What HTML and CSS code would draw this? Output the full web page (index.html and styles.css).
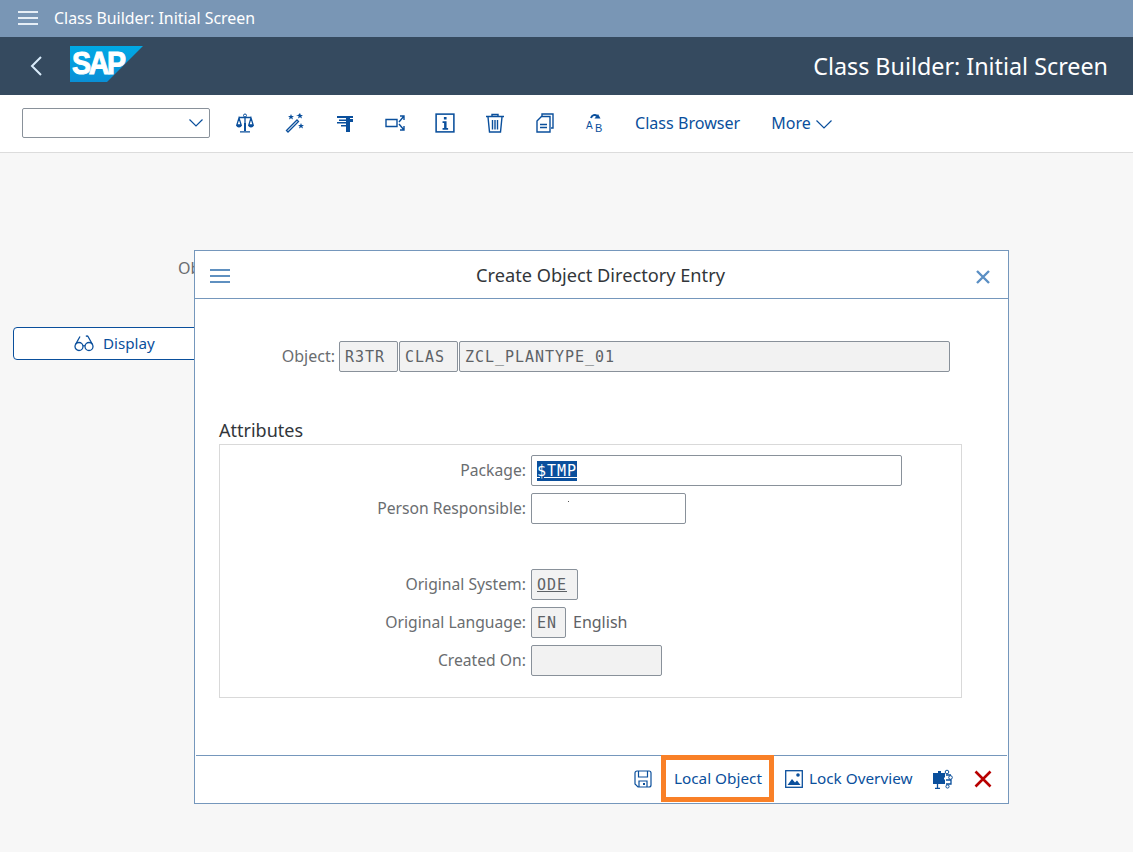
FILE: index.html
```html
<!DOCTYPE html>
<html lang="en">
<head>
    <meta charset="UTF-8">
    <meta name="viewport" content="width=device-width, initial-scale=1.0">
    <title>Class Builder: Initial Screen</title>
    <link rel="stylesheet" href="styles.css">
</head>
<body>
    <!-- Title bar -->
    <div class="title-bar">
        <svg class="burger" width="20" height="14" viewBox="0 0 20 14"><path d="M0 1h20M0 7h20M0 13h20" stroke="#e6eef6" stroke-width="2"/></svg>
        <span>Class Builder: Initial Screen</span>
    </div>

    <!-- Shell header -->
    <div class="shell">
        <svg class="back" width="12" height="20" viewBox="0 0 12 20"><path d="M11 1L2 10l9 9" fill="none" stroke="#d9ecfb" stroke-width="2"/></svg>
        <div class="logo">
            <svg width="73" height="36" viewBox="0 0 73 36"><defs><linearGradient id="sapblue" x1="0" y1="0" x2="0" y2="1"><stop offset="0" stop-color="#00a9e5"/><stop offset="1" stop-color="#0a8fd6"/></linearGradient></defs><polygon points="0,0 73,0 37,36 0,36" fill="url(#sapblue)"/></svg>
            <span class="logo-text">SAP</span>
        </div>
        <h1>Class Builder: Initial Screen</h1>
    </div>

    <!-- Toolbar -->
    <div class="toolbar">
        <div class="select-box">
            <svg width="14" height="8" viewBox="0 0 14 8"><path d="M.5.5L7 7 13.5.5" fill="none" stroke="#0a4f9c" stroke-width="1.2"/></svg>
        </div>
        <div class="tool-icons">
            <svg class="icon" viewBox="0 0 18 20"><circle cx="9" cy="2.500" r="1.500" fill="none" stroke="#0a4f9c"/><path d="M9 4v14M4 18.800h10M3 4.500h12M3 5L.8 12h4.400zM15 5l-2.200 7h4.400z" fill="none" stroke="#0a4f9c" stroke-width="1.300"/><path d="M.3 12a2.700 2.400 0 0 0 5.400 0zM12.300 12a2.700 2.400 0 0 0 5.400 0z" fill="#0a4f9c"/><path d="M8 10h2v8H8z" fill="#0a4f9c"/></svg>
            <svg class="icon" viewBox="0 0 20 20"><path d="M1.500 17.500L12 7l1.500 1.500L3 19z" fill="none" stroke="#0a4f9c" stroke-width="1.300"/><path d="M6 1l.8 2H9L7.300 4.300 8 6.500 6 5.200 4 6.500l.7-2.200L3 3h2.200zM15 0l.8 2H18l-1.700 1.300.7 2.200-2-1.300-2 1.300.7-2.200L11 2h2.200zM16 10l.8 2H19l-1.700 1.300.7 2.200-2-1.300-2 1.300.7-2.200L13 12h2.200z" fill="#0a4f9c"/></svg>
            <svg class="icon" viewBox="0 0 18 20"><path d="M1 3h16v2H1zM3 6.500h9V8H3zM1 9h10v1.500H1zM5 12h6v1.500H5zM10 5h4v14h-4zM14 6h3v3h-3z" fill="#0a4f9c"/></svg>
            <svg class="icon" viewBox="0 0 20 20"><path d="M1 6.500h11v7H1zM14 9l5-6M15 3h4v4M14 11l5 6M15 17h4v-4" fill="none" stroke="#0a4f9c" stroke-width="1.400"/></svg>
            <svg class="icon" viewBox="0 0 18 18"><rect x="1" y="1" width="16" height="16" fill="none" stroke="#0a4f9c" stroke-width="1.400"/><path d="M8 3.500h2.400v2.400H8zM6.800 7.500h3.600v6h1.400V15H6.800v-1.500h1.400V9H6.800z" fill="#0a4f9c"/></svg>
            <svg class="icon" viewBox="0 0 18 20"><path d="M0 3.500h18M6 3.500V1.500h6v2M2 4L3.500 19h11L16 4M6.500 7v9.500M9 7v9.500M11.500 7v9.500" fill="none" stroke="#0a4f9c" stroke-width="1.400"/></svg>
            <svg class="icon" viewBox="0 0 18 20"><path d="M6 3.500V1h11v14h-2M1 8l4.500-4.500H14V19H1zM4 11.500h7M4 14.500h7" fill="none" stroke="#0a4f9c" stroke-width="1.400"/></svg>
            <svg class="icon icon-ab" viewBox="0 0 18 20"><path d="M5 5C6 2 9 1 11 3" fill="none" stroke="#0a4f9c" stroke-width="2"/><path d="M8.500 5.500h6L12 1z" fill="#0a4f9c"/><text x="0" y="15.500" class="icon-a">A</text><text x="9" y="19" class="icon-b">B</text></svg>
        </div>
        <a class="tool-link browser">Class Browser</a>
        <a class="tool-link more">More
            <svg width="16" height="9" viewBox="0 0 16 9"><path d="M.5.5L8 8 15.500.5" fill="none" stroke="#0a4f9c" stroke-width="1.200"/></svg>
        </a>
    </div>

    <!-- Screen behind the dialog -->
    <div class="content">
        <div class="back-label">Object Type</div>
        <div class="display-btn">
            <svg width="20" height="17" viewBox="0 0 20 17"><g fill="none" stroke="#0a4f9c" stroke-width="1.300"><circle cx="5" cy="11.500" r="4"/><circle cx="15" cy="11.500" r="4"/><path d="M9 11c.7-.6 1.300-.6 2 0M1.500 9.500L6 1.500M18.500 9.500L14 1.500C13.500.8 12.500.8 12 1.500"/></g></svg>
            <span class="display-text">Display</span>
        </div>
    </div>

    <!-- Dialog -->
    <div class="dialog">
        <div class="dialog-head">
            <svg class="dialog-menu" width="20" height="14" viewBox="0 0 20 14"><path d="M0 1h20M0 7h20M0 13h20" stroke="#5f90c0" stroke-width="2"/></svg>
            <span class="dialog-title">Create Object Directory Entry</span>
            <svg class="dialog-close" width="14" height="14" viewBox="0 0 14 14"><path d="M1 1l12 12M13 1L1 13" stroke="#5b8fc4" stroke-width="2.400"/></svg>
        </div>

        <div class="dialog-body">
            <div class="object-row">
                <label class="object-label">Object:</label>
                <div class="field ro w-59">R3TR</div>
                <div class="field ro w-59">CLAS</div>
                <div class="field ro w-491">ZCL_PLANTYPE_01</div>
            </div>

            <h3 class="group-title">Attributes</h3>
            <div class="group">
                <div class="row">
                    <label>Package:</label>
                    <div class="field w-371"><span class="selected">$TMP</span></div>
                </div>
                <div class="row">
                    <label>Person Responsible:</label>
                    <div class="field w-155"><i class="speck"></i></div>
                </div>
                <div class="row gap-top">
                    <label>Original System:</label>
                    <div class="field ro w-47"><u>ODE</u></div>
                </div>
                <div class="row">
                    <label>Original Language:</label>
                    <div class="field ro w-35">EN</div>
                    <span class="lang-text">English</span>
                </div>
                <div class="row">
                    <label>Created On:</label>
                    <div class="field ro w-131"></div>
                </div>
            </div>
        </div>

        <div class="dialog-foot">
            <svg class="foot-save" width="18" height="18" viewBox="0 0 18 18"><path d="M3 1h12a2 2 0 0 1 2 2v12a2 2 0 0 1-2 2H4l-3-3V3a2 2 0 0 1 2-2zM4.500 1v6h9V1M5 17v-6h8v6" fill="none" stroke="#0a4f9c" stroke-width="1.200"/><rect x="9" y="13" width="2" height="2" fill="#0a4f9c"/></svg>
            <a class="foot-link local">Local Object</a>
            <svg class="foot-img" width="18" height="18" viewBox="0 0 18 18"><rect x=".7" y=".7" width="16.600" height="16.600" fill="none" stroke="#0a4f9c" stroke-width="1.300"/><path d="M2.500 15l4.500-6 3 3.500 2-2 3.500 4.500z" fill="#0a4f9c"/><circle cx="13" cy="5" r="1.800" fill="#0a4f9c"/></svg>
            <a class="foot-link lock">Lock Overview</a>
            <svg class="foot-puzzle" width="20" height="20" viewBox="0 0 20 20"><path d="M0 4h5V2h3v2h4v4.500h-1v2h1V15H0z" fill="#0a4f9c"/><circle cx="14" cy="3" r="1.800" fill="none" stroke="#0a4f9c"/><circle cx="17.500" cy="8.500" r="1.800" fill="none" stroke="#0a4f9c"/><path d="M13 6h5M13 11h5v4h-5M4.500 15v4M2 19.300h5" fill="none" stroke="#0a4f9c" stroke-width="1.300"/><circle cx="14.500" cy="17.500" r="1.600" fill="none" stroke="#0a4f9c"/></svg>
            <svg class="foot-cancel" width="18" height="18" viewBox="0 0 18 18"><path d="M1.500 1.500l15 15M16.500 1.500l-15 15" stroke="#b80000" stroke-width="2.600"/></svg>
        </div>
    </div>
</body>
</html>
```

FILE: styles.css
```css
/* General Styles */
* {
    box-sizing: border-box;
}

body {
    font-family: "Noto Sans", "Liberation Sans", sans-serif;
    font-size: 16px;
    background-color: #f7f7f7;
    margin: 0;
    height: 852px;
    overflow: hidden;
    position: relative;
    display: flex;
    flex-direction: column;
}

a {
    color: #0a4f9c;
}

/* Title bar */
.title-bar {
    height: 37px;
    background-color: #7996b5;
    color: #fff;
    display: flex;
    align-items: center;
    padding: 0 0 1px 18px;
    gap: 16px;
    font-size: 15.900px;
}

/* Shell header */
.shell {
    height: 58px;
    background-color: #354a5f;
    display: flex;
    align-items: center;
    padding: 0 25px 0 30px;
}

.back {
    margin-right: 28px;
}

.logo {
    position: relative;
    width: 73px;
    height: 36px;
    margin-top: -4px;
}

.logo svg {
    display: block;
}

.logo-text {
    position: absolute;
    left: 2px;
    top: 1px;
    color: #fff;
    font-family: "Liberation Sans", sans-serif;
    font-weight: bold;
    font-size: 31px;
    line-height: 34px;
    letter-spacing: -2.500px;
    -webkit-text-stroke: 1px #fff;
    transform: scaleX(.92);
    transform-origin: left center;
}

.shell h1 {
    margin: 0 0 0 auto;
    color: #fff;
    font-size: 23.300px;
    font-weight: normal;
}

/* Toolbar */
.toolbar {
    height: 58px;
    background-color: #fff;
    border-bottom: 1px solid #dcdcdc;
    display: flex;
    align-items: center;
    padding: 0 0 2px 22px;
}

.select-box {
    width: 188px;
    height: 30px;
    border: 1px solid #89919a;
    border-radius: 2px;
    display: flex;
    align-items: center;
    justify-content: flex-end;
    padding-right: 6px;
}

.tool-icons {
    display: flex;
    align-items: center;
    gap: 30px;
    margin-left: 25px;
}

.icon {
    width: 20px;
    height: 20px;
    display: block;
}

.icon-ab {
    overflow: visible;
}

.icon-a, .icon-b {
    fill: #0a4f9c;
    font-family: "Liberation Sans", sans-serif;
}

.icon-a {
    font-size: 10px;
}

.icon-b {
    font-size: 11px;
}

.tool-link {
    white-space: nowrap;
}

.browser {
    margin-left: 30px;
    font-size: 16.100px;
}

.more {
    margin-left: 31px;
    display: flex;
    align-items: center;
    gap: 5px;
}

.more svg {
    margin-top: 3px;
}

/* Screen behind the dialog */
.content {
    flex: 1;
    padding: 104px 0 0 13px;
    color: #6a6d70;
    position: relative;
}

.back-label {
    margin-left: 165px;
    height: 22px;
    line-height: 22px;
}

.display-btn {
    width: 300px;
    height: 33px;
    margin-top: 48px;
    border: 1px solid #0a4f9c;
    border-radius: 4px;
    background-color: #fff;
    color: #0a4f9c;
    font-size: 15.200px;
    display: flex;
    align-items: center;
    padding-left: 60px;
    gap: 9px;
}

.display-text {
    margin-top: -2px;
}

/* Dialog */
.dialog {
    position: absolute;
    left: 194px;
    top: 250px;
    width: 815px;
    height: 554px;
    background-color: #fff;
    border: 1px solid #7597bc;
    display: flex;
    flex-direction: column;
}

.dialog-head {
    height: 48px;
    flex-shrink: 0;
    border-bottom: 1px solid #7597bc;
    display: flex;
    align-items: center;
    justify-content: center;
    position: relative;
    color: #32363a;
    font-size: 18.200px;
    padding-right: 2px;
}

.dialog-menu {
    position: absolute;
    left: 15px;
    top: 18px;
}

.dialog-close {
    position: absolute;
    right: 18px;
    top: 19px;
}

.dialog-body {
    flex: 1;
    padding: 42px 0 0 24px;
}

.object-row {
    display: flex;
    gap: 1px;
    align-items: center;
}

.object-label {
    width: 119px;
    padding: 0 3px 2px 0;
    text-align: right;
    color: #6a6d70;
}

.group-title {
    margin: 46px 0 0;
    font-size: 18px;
    line-height: 24px;
    font-weight: normal;
    color: #32363a;
}

.group {
    width: 743px;
    height: 254px;
    margin-top: 2px;
    border: 1px solid #d9d9d9;
    padding-top: 10px;
}

.row {
    display: flex;
    align-items: center;
    margin-bottom: 7px;
}

.row label {
    width: 311px;
    padding: 0 5px 2px 0;
    text-align: right;
    color: #6a6d70;
    font-size: 15.700px;
    white-space: nowrap;
}

.gap-top {
    margin-top: 45px;
}

.field {
    height: 31px;
    border: 1px solid #89919a;
    border-radius: 2px;
    background-color: #fff;
    font-family: "DejaVu Sans Mono", "Liberation Mono", monospace;
    font-size: 15px;
    letter-spacing: .97px;
    line-height: 30px;
    padding-left: 5px;
    color: #32363a;
    position: relative;
    flex-shrink: 0;
}

.ro {
    background-color: #f2f2f2;
    color: #5e6266;
}

.w-35 { width: 35px; }
.w-47 { width: 47px; }
.w-59 { width: 59px; }
.w-131 { width: 131px; }
.w-155 { width: 155px; }
.w-371 { width: 371px; }
.w-491 { width: 491px; }

.selected {
    background-color: #0a4f9c;
    color: #fff;
    text-decoration: underline;
    padding: 1px 0;
}

.speck {
    position: absolute;
    left: 36px;
    top: 7px;
    width: 1px;
    height: 1px;
    background-color: #555;
}

.lang-text {
    margin: 0 0 2px 7px;
    color: #5e6266;
}

/* Dialog footer */
.dialog-foot {
    height: 47px;
    flex-shrink: 0;
    margin: 0 1px 1px;
    border-top: 1px solid #7597bc;
    display: flex;
    align-items: center;
    font-size: 15.300px;
    padding-left: 438px;
}

.foot-link {
    white-space: nowrap;
}

.local {
    height: 47px;
    margin-top: -1px;
    margin-left: 9px;
    border: 5px solid #f98027;
    padding: 0 0 2px 8px;
    display: flex;
    align-items: center;
    width: 113px;
}

.foot-img {
    margin-left: 11px;
}

.lock {
    margin: 0 0 2px 6px;
}

.foot-puzzle {
    margin-left: 21px;
}

.foot-cancel {
    margin-left: 21px;
}
```
